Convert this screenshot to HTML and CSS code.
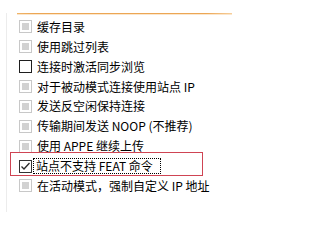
FILE: index.html
```html
<!DOCTYPE html>
<html>
<head>
<meta charset="utf-8">
<link rel="stylesheet" href="styles.css">
</head>
<body>
<div class="panel">
  <div class="rule"></div>
  <ul class="options">
    <li class="opt"><span class="cb disabled"></span><span class="label">缓存目录</span></li>
    <li class="opt"><span class="cb disabled"></span><span class="label">使用跳过列表</span></li>
    <li class="opt"><span class="cb"></span><span class="label">连接时激活同步浏览</span></li>
    <li class="opt"><span class="cb disabled"></span><span class="label">对于被动模式连接使用站点 IP</span></li>
    <li class="opt"><span class="cb disabled"></span><span class="label">发送反空闲保持连接</span></li>
    <li class="opt"><span class="cb disabled"></span><span class="label">传输期间发送 NOOP (不推荐)</span></li>
    <li class="opt"><span class="cb disabled"></span><span class="label">使用 APPE 继续上传</span></li>
    <li class="opt"><span class="cb checked"><svg viewBox="0 0 11 11" width="11" height="11"><path d="M1.5 5.5 L4 8 L9.5 2" fill="none" stroke="#2a2a2a" stroke-width="1.3"/></svg></span><span class="label focus">站点不支持 FEAT 命令</span></li>
    <li class="opt"><span class="cb disabled"></span><span class="label">在活动模式，强制自定义 IP 地址</span></li>
  </ul>
</div>
<div class="highlight"></div>
</body>
</html>
```
FILE: styles.css
```css
html, body {
  margin: 0;
  padding: 0;
  background: #ffffff;
}
body {
  width: 294px;
  height: 212px;
  overflow: hidden;
  position: relative;
  font-family: "Noto Sans CJK SC", "Noto Sans", sans-serif;
  font-size: 12px;
  color: #000;
}
.panel {
  margin: 13px 0 0 6px;
  height: 199px;
  border-left: 1px solid #ececec;
}
.rule {
  margin-left: 10px;
  margin-top: 1px;
  width: 215px;
  height: 1px;
  background: linear-gradient(to right, #f0b56a, #eca654 8%, #eca654 88%, #f6cf9c);
  box-shadow: 0 1px 0 #fbe6cc;
}
.options {
  list-style: none;
  margin: 3px 0 0 0;
  padding: 0 0 0 12px;
}
.opt {
  height: 19.875px;
  display: flex;
  align-items: center;
  white-space: nowrap;
}
.cb {
  box-sizing: border-box;
  width: 13px;
  height: 13px;
  border: 1px solid #1e1e1e;
  background: #fff;
  flex: none;
  display: flex;
  align-items: center;
  justify-content: center;
  margin-right: 4px;
}
.cb.disabled {
  border-color: #c8c8c8;
}
.cb.disabled::after {
  content: "";
  width: 7px;
  height: 7px;
  background: #d2d2d2;
}
.cb.checked {
  border-color: #333;
}
.label {
  line-height: 14px;
  padding: 0 1px;
}
.focus {
  outline: 1px dotted #000;
  outline-offset: 0;
  margin-left: -2px;
  padding: 0 7px 0 2px;
}
.highlight {
  position: absolute;
  left: 10px;
  top: 152px;
  width: 193px;
  height: 24px;
  box-sizing: border-box;
  border: 1px solid #cf4453;
}
```
